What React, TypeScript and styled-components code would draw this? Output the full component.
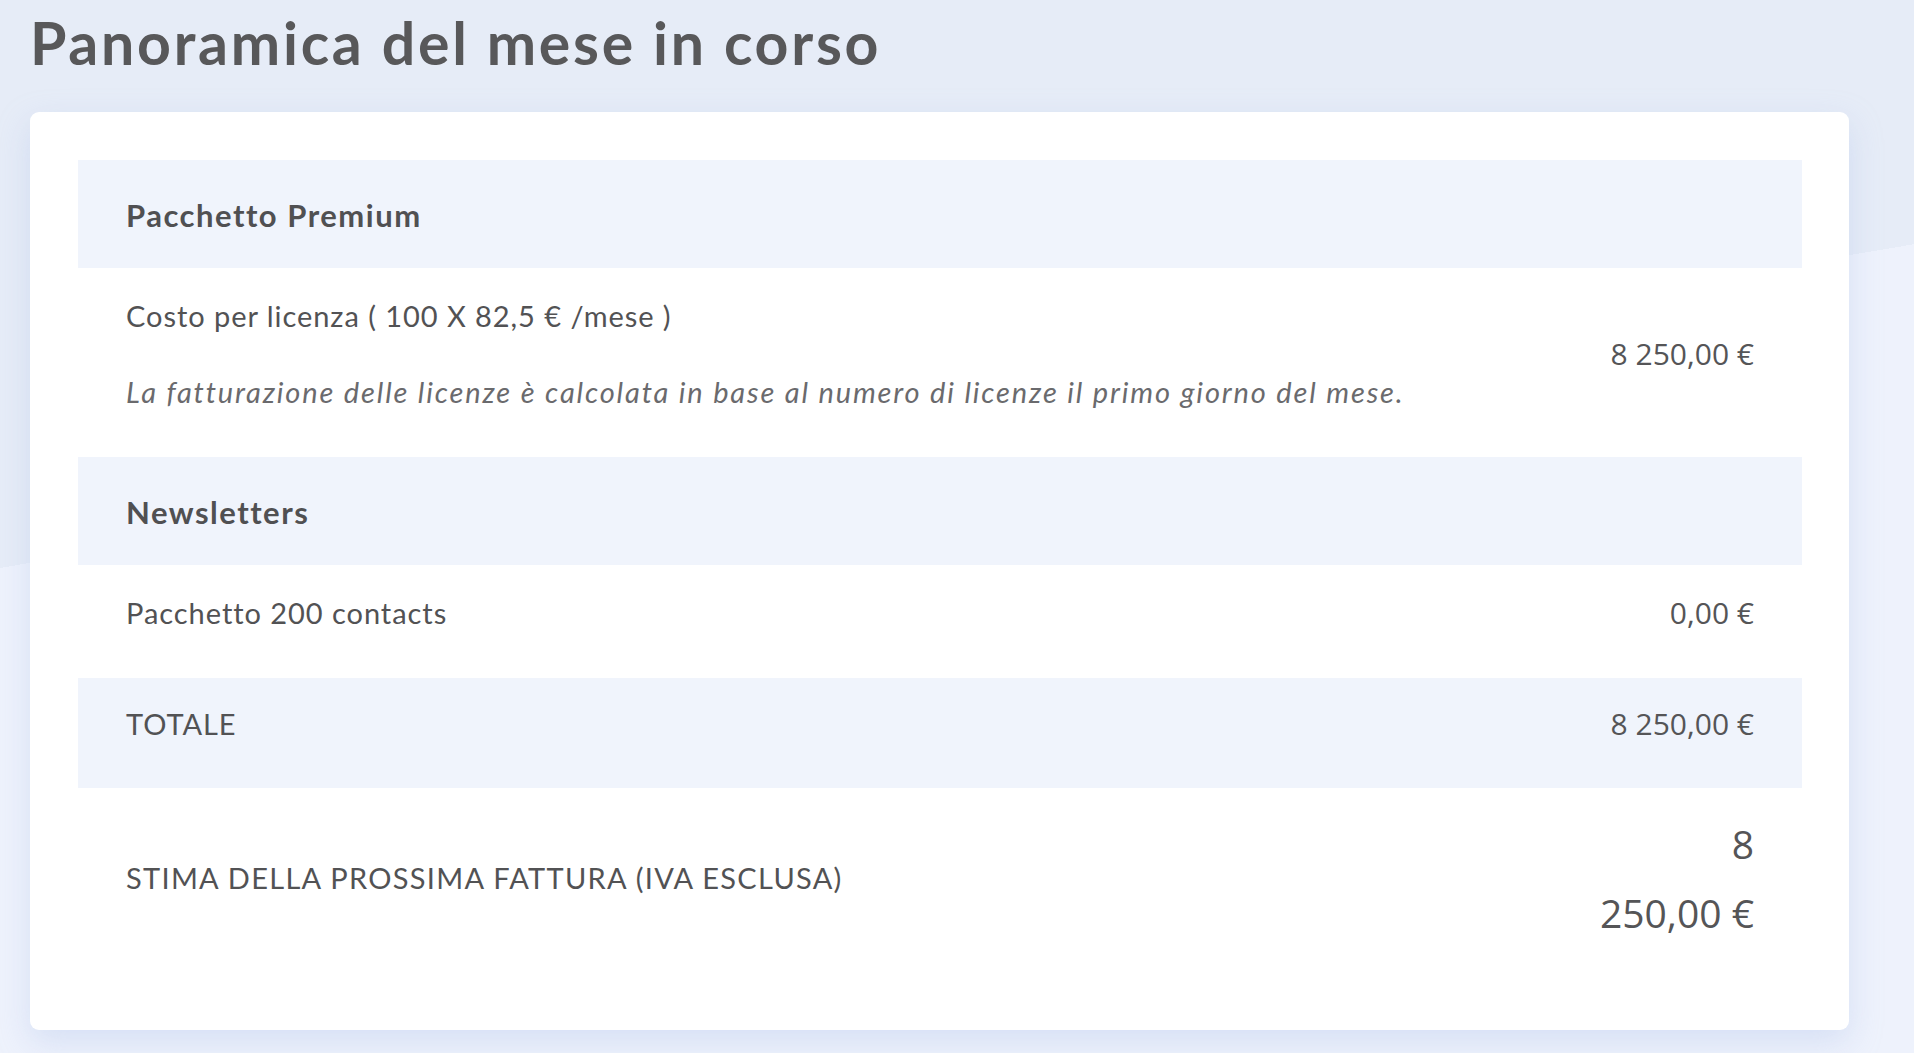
import styled, { createGlobalStyle } from 'styled-components';

const GlobalStyle = createGlobalStyle`
  html, body {
    margin: 0;
    padding: 0;
  }

  body {
    font-family: 'Lato', 'Open Sans', sans-serif;
    color: #555558;
    background: #eef2fc;
  }
`;

type LineItem = {
  label: string;
  note?: string;
  value: string;
};

type Section = {
  title: string;
  items: LineItem[];
};

const sections: Section[] = [
  {
    title: 'Pacchetto Premium',
    items: [
      {
        label: 'Costo per licenza ( 100 X 82,5 € /mese )',
        note: 'La fatturazione delle licenze è calcolata in base al numero di licenze il primo giorno del mese.',
        value: '8 250,00 €',
      },
    ],
  },
  {
    title: 'Newsletters',
    items: [{ label: 'Pacchetto 200 contacts', value: '0,00 €' }],
  },
];

const App = () => {
  return (
    <StPage>
      <GlobalStyle />
      <StTitle>Panoramica del mese in corso</StTitle>
      <StCard>
        {sections.map((section) => (
          <div key={section.title}>
            <StSectionHeader>{section.title}</StSectionHeader>
            {section.items.map((item) => (
              <StRow key={item.label}>
                <StLabelBlock>
                  <StLabel>{item.label}</StLabel>
                  {item.note && <StNote>{item.note}</StNote>}
                </StLabelBlock>
                <StValue>{item.value}</StValue>
              </StRow>
            ))}
          </div>
        ))}
        <StRow $shaded>
          <StLabel>TOTALE</StLabel>
          <StValue>8 250,00 €</StValue>
        </StRow>
        <StEstimateRow>
          <StLabel $spacing="1.3px">STIMA DELLA PROSSIMA FATTURA (IVA ESCLUSA)</StLabel>
          <StEstimateValue>
            <span>8</span>
            <span>250,00 €</span>
          </StEstimateValue>
        </StEstimateRow>
      </StCard>
    </StPage>
  );
};

const StPage = styled.div`
  min-height: 1053px;
  box-sizing: border-box;
  padding: 0 65px 24px 30px;
  background: linear-gradient(170.4deg, #e6ecf7 560px, #eef2fc 560px);
`;

const StTitle = styled.h1`
  margin: 0;
  padding-top: 8px;
  height: 104px;
  font-size: 59px;
  font-weight: 700;
  line-height: 70px;
  color: #58585a;
  letter-spacing: 2.75px;
`;

const StCard = styled.div`
  background: #ffffff;
  border-radius: 9px;
  padding: 48px 47px 48px 48px;
  box-shadow: 0 12px 32px rgba(170, 188, 232, 0.35);
`;

const StSectionHeader = styled.div`
  background: #f0f4fc;
  padding: 37px 48px 35px;
  font-size: 31px;
  font-weight: 700;
  line-height: 36px;
  letter-spacing: 1.5px;
  color: #505052;
`;

const StRow = styled.div<{ $shaded?: boolean }>`
  display: flex;
  align-items: center;
  justify-content: space-between;
  gap: 40px;
  padding: ${({ $shaded }) => ($shaded ? '28px 48px 46px' : '30px 48px 47px')};
  background: ${({ $shaded }) => ($shaded ? '#f0f4fc' : 'transparent')};
`;

const StLabelBlock = styled.div`
  display: flex;
  flex-direction: column;
  gap: 40px;
`;

const StLabel = styled.div<{ $spacing?: string }>`
  font-size: 29px;
  line-height: 36px;
  letter-spacing: ${({ $spacing }) => $spacing ?? '0.95px'};
  color: #525254;
`;

const StNote = styled.div`
  font-size: 29px;
  line-height: 36px;
  font-style: italic;
  letter-spacing: 1.85px;
  color: #6a6a6d;
`;

const StValue = styled.div`
  font-family: 'Open Sans', sans-serif;
  font-size: 30px;
  line-height: 36px;
  color: #555557;
  white-space: nowrap;
`;

const StEstimateRow = styled.div`
  display: flex;
  align-items: center;
  justify-content: space-between;
  padding: 21px 48px 35px;
`;

const StEstimateValue = styled.div`
  display: flex;
  flex-direction: column;
  align-items: flex-end;
  font-family: 'Open Sans', sans-serif;
  font-size: 39px;
  font-weight: 500;
  line-height: 69px;
  color: #555557;
`;

export default App;
